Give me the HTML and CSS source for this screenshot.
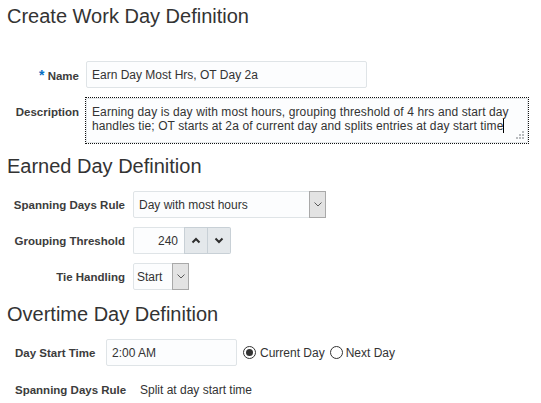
FILE: index.html
```html
<!DOCTYPE html>
<html>
<head>
<meta charset="utf-8">
<title>Create Work Day Definition</title>
<link rel="stylesheet" href="styles.css">
</head>
<body>
<div class="page">
  <h1 class="title">Create Work Day Definition</h1>

  <div class="form form-main">
    <div class="lbl"><span class="req">*</span> Name</div>
    <div class="input input-name">Earn Day Most Hrs, OT Day 2a</div>

    <div class="lbl lbl-top">Description</div>
    <div class="textarea">Earning day is day with most hours, grouping threshold of 4 hrs and start day handles tie; OT starts at 2a of current day and splits entries at day start time<span class="caret"></span>
      <svg class="grip" width="8" height="8" viewBox="0 0 8 8"><rect x="6" y="0" width="2" height="2"/><rect x="3" y="3" width="2" height="2"/><rect x="6" y="3" width="2" height="2"/><rect x="0" y="6" width="2" height="2"/><rect x="3" y="6" width="2" height="2"/><rect x="6" y="6" width="2" height="2"/></svg>
    </div>
  </div>

  <h2 class="section section-earned">Earned Day Definition</h2>

  <div class="form form-earned">
    <div class="lbl">Spanning Days Rule</div>
    <div class="select select-rule">
      <span class="select-text">Day with most hours</span>
      <span class="select-btn"><svg width="8" height="5" viewBox="0 0 8 5"><path d="M0.5 0.5 L4 4 L7.5 0.5"/></svg></span>
    </div>

    <div class="lbl">Grouping Threshold</div>
    <div class="spinner">
      <span class="spin-input">240</span>
      <span class="spin-btn"><svg width="10" height="7" viewBox="0 0 10 7"><path d="M1.5 5.5 L5 2 L8.5 5.5"/></svg></span>
      <span class="spin-btn spin-btn-last"><svg width="10" height="7" viewBox="0 0 10 7"><path d="M1.5 1.5 L5 5 L8.5 1.5"/></svg></span>
    </div>

    <div class="lbl">Tie Handling</div>
    <div class="select select-tie">
      <span class="select-text select-text-tie">Start</span>
      <span class="select-btn"><svg width="8" height="5" viewBox="0 0 8 5"><path d="M0.5 0.5 L4 4 L7.5 0.5"/></svg></span>
    </div>
  </div>

  <h2 class="section section-ot">Overtime Day Definition</h2>

  <div class="ot-row ot-row-first">
    <div class="lbl lbl-start">Day Start Time</div>
    <div class="input input-time">2:00 AM</div>
    <span class="radio radio-on"></span>
    <span class="radio-text">Current Day</span>
    <span class="radio radio-second"></span>
    <span class="radio-text">Next Day</span>
  </div>

  <div class="ot-row ot-row-second">
    <div class="lbl lbl-span">Spanning Days Rule</div>
    <div class="value">Split at day start time</div>
  </div>
</div>
</body>
</html>
```

FILE: styles.css
```css
* { box-sizing: border-box; }

body {
  margin: 0;
  background: #ffffff;
  font-family: "Liberation Sans", Arial, sans-serif;
  font-size: 12px;
  color: #333333;
}

.page {
  padding: 5px 7px 0 7px;
}

.title,
.section {
  margin: 0;
  font-size: 20px;
  font-weight: normal;
  line-height: 23px;
  color: #333333;
}

.section-earned { margin-top: 12px; }
.section-ot { margin-top: 13px; }

.form {
  display: grid;
  align-items: center;
  justify-items: start;
}

.form-main {
  margin-top: 33px;
  grid-template-columns: 72px 442px;
  column-gap: 7px;
  row-gap: 10px;
}

.form-earned {
  margin-top: 13px;
  grid-template-columns: 118px auto;
  column-gap: 8px;
  row-gap: 9px;
}

.lbl {
  justify-self: end;
  font-size: 11.5px;
  font-weight: bold;
  color: #3c3c3c;
  white-space: nowrap;
}

.lbl-top {
  align-self: start;
  padding-top: 7px;
  line-height: 14px;
}

.req {
  color: #0a6fc2;
  font-size: 14px;
  font-weight: bold;
}

.input {
  height: 27px;
  border: 1px solid #dfe4e7;
  border-radius: 2px;
  background: #fcfdfe;
  padding: 0 5px;
  display: flex;
  align-items: center;
  white-space: nowrap;
}

.input-name { width: 281px; }

.textarea {
  position: relative;
  width: 442px;
  height: 45px;
  border: 1px solid #e3e7ea;
  background: #fcfdfe;
  outline: 1px dotted #111111;
  padding: 6px 5px 0 5px;
  line-height: 14px;
  letter-spacing: 0.11px;
}

.caret {
  display: inline-block;
  width: 1px;
  height: 14px;
  background: #000000;
  vertical-align: -3px;
}

.grip {
  position: absolute;
  right: 3px;
  bottom: 3px;
  fill: #b9bcbf;
}

.select {
  height: 27px;
  border: 1px solid #dfe4e7;
  border-radius: 2px;
  background: #fcfdfe;
  display: flex;
  align-items: stretch;
}

.select-rule { width: 193px; }
.select-tie { width: 56px; }

.select-text {
  flex: 1;
  display: flex;
  align-items: center;
  padding-left: 5px;
  white-space: nowrap;
}

.select-text-tie { padding-left: 3px; }

.select-btn {
  width: 17px;
  margin: -1px -1px -1px 0;
  border: 1px solid #a9a9a9;
  background: #e3e3e3;
  display: flex;
  align-items: center;
  justify-content: center;
}

.select-btn path {
  fill: none;
  stroke: #5a5a5a;
  stroke-width: 1;
}

.spinner {
  display: flex;
  height: 27px;
}

.spin-input {
  width: 51px;
  border: 1px solid #dfe4e7;
  border-right: none;
  border-radius: 2px 0 0 2px;
  background: #fcfdfe;
  display: flex;
  align-items: center;
  justify-content: flex-end;
  padding-right: 6px;
}

.spin-btn {
  width: 24px;
  border: 1px solid #c8d0d6;
  background: #e4e8eb;
  display: flex;
  align-items: center;
  justify-content: center;
}

.spin-btn-last {
  width: 23px;
  border-left: none;
  border-radius: 0 2px 2px 0;
}

.spin-btn path {
  fill: none;
  stroke: #2e2e2e;
  stroke-width: 2;
}

.ot-row {
  display: flex;
  align-items: center;
  height: 27px;
  padding-left: 8px;
}

.ot-row-first { margin-top: 13px; }
.ot-row-second { margin-top: 10px; }

.lbl-start { width: 91px; }
.lbl-span { width: 125px; }

.input-time {
  width: 131px;
  margin-right: 6px;
}

.radio {
  width: 13px;
  height: 13px;
  border: 1px solid #333333;
  border-radius: 50%;
  background: #ffffff;
  display: flex;
  align-items: center;
  justify-content: center;
  margin-right: 4px;
}

.radio-on::after {
  content: "";
  width: 7px;
  height: 7px;
  border-radius: 50%;
  background: #333333;
}

.radio-second { margin-left: 5px; margin-right: 3px; }

.radio-text { white-space: nowrap; }

.value {
  white-space: nowrap;
}
```
